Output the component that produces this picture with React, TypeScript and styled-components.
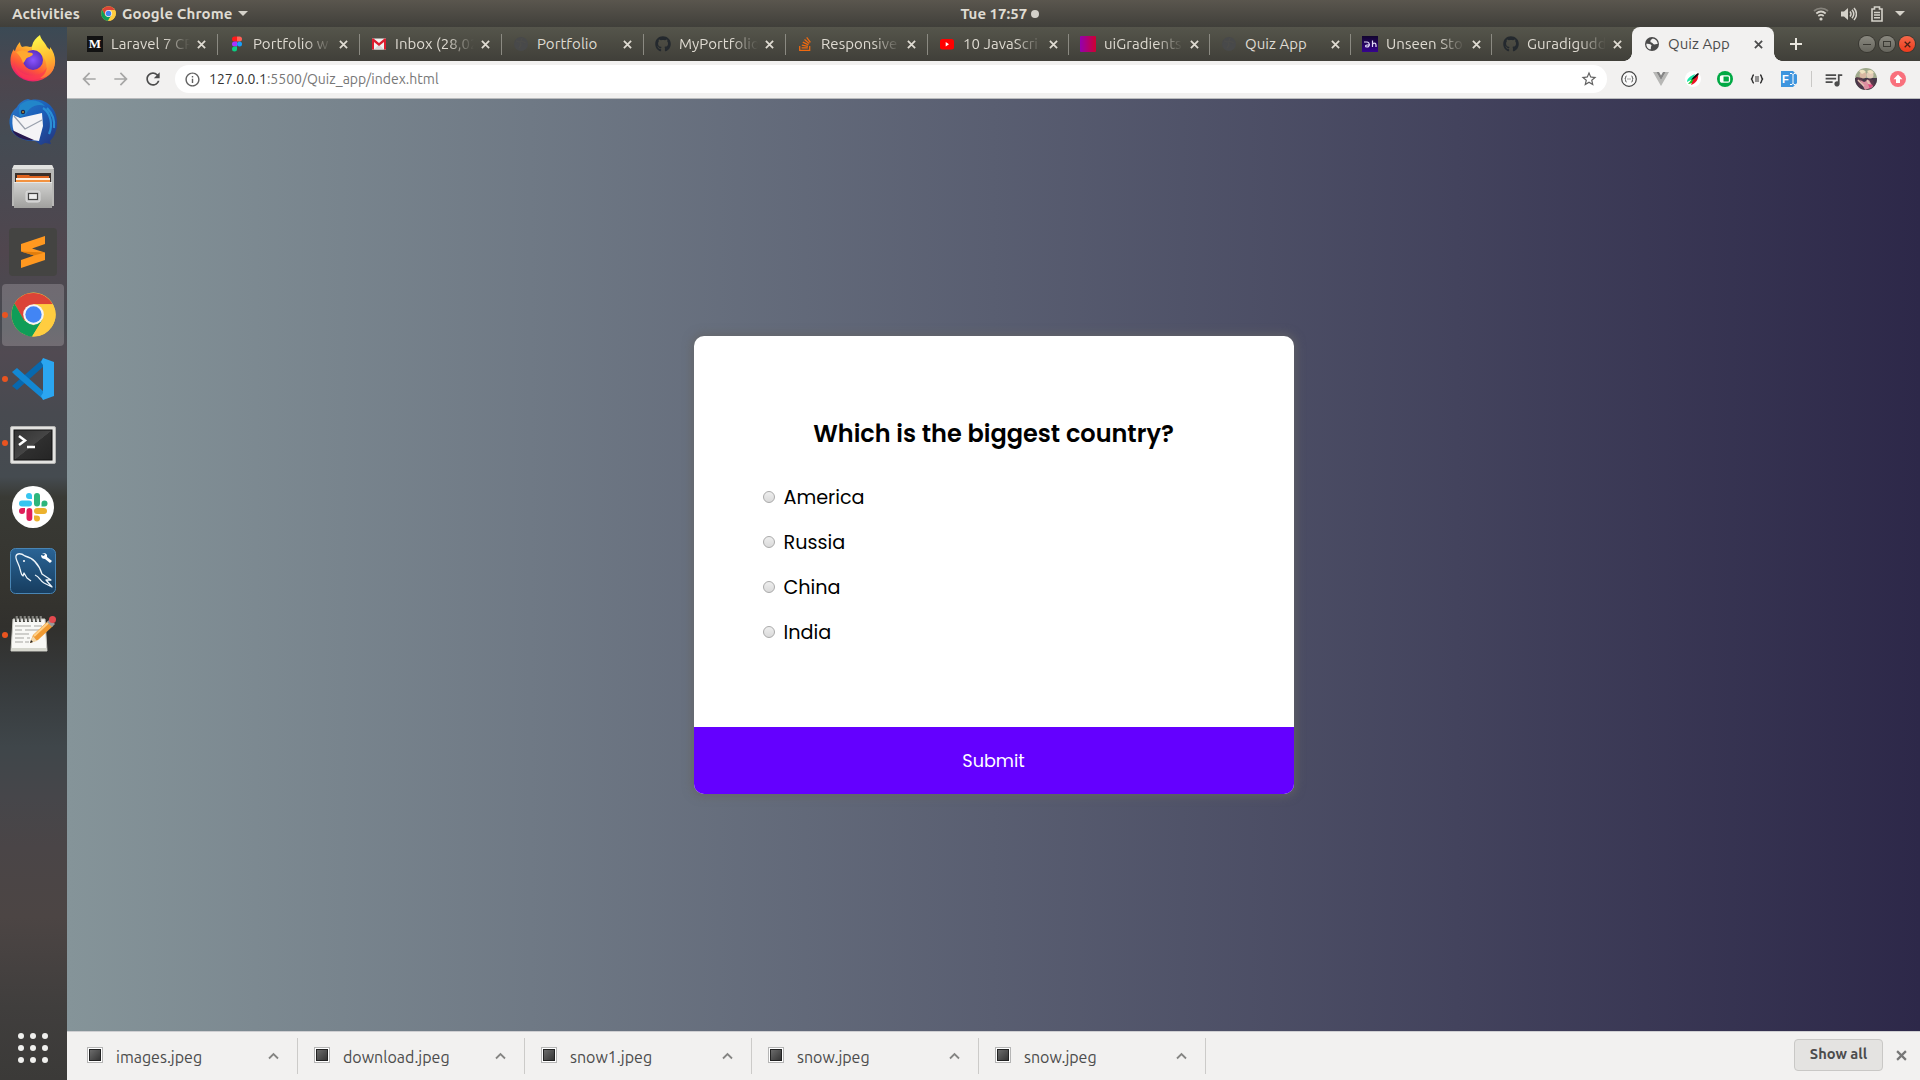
import React from "react";
import styled, { createGlobalStyle, css } from "styled-components";
import { FaGithub, FaStackOverflow } from "react-icons/fa";
import { MdQueueMusic, MdStarBorder, MdRefresh, MdArrowBack, MdArrowForward, MdInfoOutline } from "react-icons/md";

const ui = `Ubuntu, "Noto Sans", "Open Sans", sans-serif`;
const quiz = `Poppins, Inter, "Open Sans", sans-serif`;

const Global = createGlobalStyle`
  * { box-sizing: border-box; }
  html, body { margin: 0; padding: 0; overflow: hidden; }
  svg { display: block; flex: none; }
`;

const Desktop = styled.div`
  width: 1920px;
  height: 1080px;
  display: grid;
  grid-template: 27px 1053px / 67px 1853px;
  font-family: ${ui};
  overflow: hidden;
`;

/* ---------- system bar ---------- */
const SystemBar = styled.header`
  grid-column: 1 / 3;
  display: grid;
  grid-template-columns: 1fr auto 1fr;
  align-items: center;
  background: linear-gradient(#5a564e, #403f3a);
  color: #dfdbd2;
  font-size: 15px;
  font-weight: 600;
  line-height: 26px;
  letter-spacing: 0.12px;
`;
const SystemLeft = styled.div`
  display: flex;
  align-items: center;
  padding-left: 12px;
  white-space: nowrap;
`;
const SystemLabel = styled.span<{ $w: number; $ml?: number }>`
  width: ${(p) => p.$w}px;
  margin-left: ${(p) => p.$ml ?? 0}px;
  white-space: nowrap;
`;
const Clock = styled.div`
  display: flex;
  align-items: center;
  gap: 2px;
  margin-left: 80px;
  width: 79px;
  letter-spacing: 0;
`;
const ClockDot = styled.i`
  width: 8px;
  height: 8px;
  border-radius: 50%;
  background: #d3d0c9;
`;
const SystemRight = styled.div`
  display: flex;
  justify-content: flex-end;
  align-items: center;
  padding-right: 15px;
`;
const Caret = styled.i`
  border: 5px solid transparent;
  border-top-color: #d5d2ca;
  border-bottom: 0;
`;

/* ---------- dock ---------- */
const Dock = styled.nav`
  display: flex;
  flex-direction: column;
  background: linear-gradient(
    #3b4a55 0, #4d464e 55px, #444b53 110px, #50464e 225px, #474b51 300px, #514a52 325px, #484a50 385px,
    #454b50 450px, #393a35 470px, #35342f 560px, #31302d 600px, #373b3d 660px, #3f464a 720px, #46464a 770px,
    #4a4547 820px, #4c4544 890px, #403e3d 980px, #3b3a38 1053px
  );
`;
const DockItem = styled.div<{ $active?: boolean }>`
  height: 62px;
  margin: 0 3px 2.15px 2px;
  display: flex;
  align-items: center;
  border-radius: 4px;
  ${(p) => p.$active && css`background: rgba(255, 245, 250, 0.2);`}
`;
const RunDot = styled.i<{ $on?: boolean }>`
  width: 6px;
  height: 6px;
  border-radius: 50%;
  background: ${(p) => (p.$on ? "#e95420" : "transparent")};
`;
const DockIcon = styled.span<{ $dy?: number }>`
  width: 50px;
  display: grid;
  place-items: center;
  margin-top: ${(p) => 2 * (p.$dy ?? 0)}px;
`;
const AppsGrid = styled.div`
  margin: auto 0 17px 18px;
  display: grid;
  grid-template-columns: repeat(3, 6px);
  gap: 6px;
`;
const AppsDot = styled.i`
  width: 6px;
  height: 6px;
  border-radius: 50%;
  background: #f0f0ee;
`;

/* ---------- browser ---------- */
const Browser = styled.main`
  display: flex;
  flex-direction: column;
  min-width: 0;
`;
const TabStrip = styled.div`
  height: 34px;
  display: flex;
  align-items: center;
  padding-left: 8px;
  background: linear-gradient(#55554b, #403f39);
`;
const TabBox = styled.div<{ $w: number; $active?: boolean; $line?: boolean }>`
  position: relative;
  width: ${(p) => p.$w}px;
  height: 34px;
  flex: none;
  display: flex;
  align-items: center;
  padding-left: 12px;
  color: ${(p) => (p.$active ? "#4c4c4c" : "#dfdbd2")};
  ${(p) => p.$active && css`
    background: #f2f1f0;
    border-radius: 8px 8px 0 0;
    &::before, &::after {
      content: "";
      position: absolute;
      bottom: 0;
      width: 8px;
      height: 8px;
    }
    &::before { left: -8px; background: radial-gradient(circle at 0 0, transparent 7.5px, #f2f1f0 8px); }
    &::after { right: -8px; background: radial-gradient(circle at 100% 0, transparent 7.5px, #f2f1f0 8px); }
  `}
  ${(p) => p.$line && css`
    &::after {
      content: "";
      position: absolute;
      right: -1px;
      top: 7px;
      width: 1px;
      height: 21px;
      background: #8b8a82;
    }
  `}
`;
const Favicon = styled.span`
  width: 16px;
  height: 16px;
  display: grid;
  place-items: center;
  flex: none;
`;
const TabTitle = styled.span<{ $fade?: boolean }>`
  margin-left: 8px;
  width: 80px;
  flex: none;
  height: 22px;
  line-height: 21px;
  white-space: nowrap;
  font-size: 15px;
  letter-spacing: 0.04px;
  ${(p) => p.$fade && css`mask-image: linear-gradient(90deg, #000 52px, transparent 79px);`}
`;
const TabClose = styled.span`
  margin-left: 6px;
`;
const NewTab = styled.span`
  margin-left: 16px;
`;
const WindowButtons = styled.div`
  margin: 0 5px 0 auto;
  display: flex;
  gap: 4px;
`;
const WindowButton = styled.span<{ $close?: boolean }>`
  width: 16px;
  height: 16px;
  border-radius: 50%;
  display: grid;
  place-items: center;
  background: ${(p) => (p.$close ? "linear-gradient(#f5694a, #ee3a1c)" : "linear-gradient(#8a8980, #66655d)")};
  box-shadow: 0 0 0 1px #393832;
`;

const Toolbar = styled.div`
  height: 38px;
  display: flex;
  align-items: flex-start;
  background: #f2f1f0;
  border-bottom: 1px solid #b9bbbd;
`;
const ToolSlot = styled.span<{ $w: number; $ml?: number; $color?: string }>`
  width: ${(p) => p.$w}px;
  margin-left: ${(p) => p.$ml ?? 0}px;
  height: 36px;
  display: grid;
  place-items: center;
  flex: none;
  color: ${(p) => p.$color ?? "#4c4c4c"};
`;
const AddressBar = styled.div`
  width: 1432px;
  height: 28px;
  margin: 4px 0 0 11px;
  padding: 0 9px 0 9px;
  border-radius: 14px;
  background: #fff;
  display: flex;
  align-items: center;
  color: #616161;
`;
const Url = styled.span`
  margin: 0 auto 0 8px;
  font-size: 14px;
  line-height: 26px;
  letter-spacing: 0.02px;
  color: #777;
`;
const Host = styled.span`
  color: #333;
`;
const ToolLine = styled.i`
  width: 1px;
  height: 16px;
  margin: 10px 0 0 12px;
  background: #c9c8c6;
`;
const PencilTile = styled.span`
  width: 16px;
  height: 16px;
  display: flex;
  align-items: center;
  padding-left: 1px;
  gap: 1px;
  background: #3e95de;
  clip-path: polygon(0 0, 75% 0, 100% 25%, 100% 75%, 75% 100%, 0 100%);
  color: #fff;
  font: bold 11px/16px "Liberation Sans", sans-serif;
`;

/* ---------- quiz page ---------- */
const Page = styled.section`
  height: 932px;
  display: flex;
  justify-content: center;
  align-items: center;
  background: linear-gradient(90deg, #859499, #2d2849);
  font-family: ${quiz};
`;
const Card = styled.article`
  width: 600px;
  height: 458px;
  border-radius: 10px;
  overflow: hidden;
  display: flex;
  flex-direction: column;
  background: #fff;
  box-shadow: 0 0 10px 2px rgba(100, 100, 100, 0.8);
`;
const CardBody = styled.div`
  flex: 1;
  padding: 79px 69px 0;
`;
const Question = styled.h2`
  margin: 0;
  text-align: center;
  font-size: 24px;
  font-weight: 600;
  line-height: 38px;
  color: #000;
`;
const Options = styled.ul`
  list-style: none;
  margin: 21px 0 0;
  padding: 0;
`;
const Option = styled.li`
  height: 45px;
  display: flex;
  align-items: center;
  gap: 9px;
  font-size: 19.2px;
  color: #000;
`;
const OptionText = styled.span`
  padding-top: 2px;
`;
const Radio = styled.i`
  width: 12px;
  height: 12px;
  border-radius: 50%;
  border: 1px solid #aaa;
  background: linear-gradient(#eee, #dadada);
`;
const Submit = styled.button`
  height: 67px;
  border: 0;
  padding: 2px 0 0;
  background: #6400ff;
  color: #fff;
  font: 400 17.6px/65px ${quiz};
`;

/* ---------- downloads ---------- */
const Downloads = styled.footer`
  flex: 1;
  display: flex;
  align-items: center;
  border-top: 1px solid #cfcfd2;
  background: #f2f1f0;
  color: #4c4c4c;
`;
const DownloadItem = styled.div`
  width: 227px;
  height: 36px;
  padding: 0 18px 0 16px;
  display: flex;
  align-items: center;
  border-right: 1px solid #cccbc9;
  &:first-child { width: 231px; padding-left: 20px; }
`;
const FileThumb = styled.i`
  width: 16px;
  height: 16px;
  margin-bottom: 2px;
  border: 1px solid #b5b5b5;
  background: linear-gradient(135deg, #777, #2a2a2a);
  box-shadow: inset 0 0 0 1px #fff, inset 0 0 0 2px #222;
`;
const FileName = styled.span`
  margin: 0 auto 0 13px;
  font-size: 16px;
  line-height: 24px;
  padding-top: 1px;
`;
const ShowAll = styled.button`
  width: 89px;
  height: 32px;
  margin: 0 13px 2px auto;
  padding: 0 0 2px;
  border: 1px solid #c9c8c6;
  border-radius: 4px;
  background: #e4e3e1;
  color: #4c4c4c;
  font: 600 14.67px/28px ${ui};
`;
const CloseSlot = styled.span`
  margin: 0 13px 2px 0;
`;

const Cross = ({ size = 9, color = "#dfdbd2", w = 2 }: { size?: number; color?: string; w?: number }) => (
  <svg width={size} height={size} viewBox="0 0 10 10" stroke={color} strokeWidth={w}>
    <path d="M1 1l8 8M9 1l-8 8" />
  </svg>
);

const ChromeLogo = ({ size }: { size: number }) => (
  <svg width={size} height={size} viewBox="0 0 48 48">
    <circle cx="24" cy="24" r="23.5" fill="#fdce3f" />
    <path d="M24 24L13.5 30 3.7 12.3A23.5 23.5 0 0 1 44.3 13H24z" fill="#db4437" />
    <path d="M3.7 12.3L13.9 30 24 35.5l9.5-6L22.5 47.5A23.5 23.5 0 0 1 3.7 12.3z" fill="#0f9d58" />
    <path d="M24 13h20.7a23.5 23.5 0 0 1-22.2 34.5L34 29z" fill="#ffcd40" />
    <circle cx="24" cy="24" r="11" fill="#f4f4f4" />
    <circle cx="24" cy="24" r="8.7" fill="#4285f4" />
  </svg>
);

const Firefox = () => (
  <svg width="46" height="48" viewBox="0 0 46 48">
    <defs>
      <linearGradient id="ffBody" x1=".8" y1="0" x2=".3" y2="1">
        <stop offset="0" stopColor="#fff44f" /><stop offset=".35" stopColor="#ffa22c" />
        <stop offset=".65" stopColor="#ff5a36" /><stop offset="1" stopColor="#e5107a" />
      </linearGradient>
      <linearGradient id="ffFlame" x1=".4" y1="0" x2=".6" y2="1">
        <stop offset="0" stopColor="#fff84a" /><stop offset=".6" stopColor="#ffb52e" /><stop offset="1" stopColor="#ff7139" />
      </linearGradient>
      <radialGradient id="ffGlobe"><stop offset="0" stopColor="#8a55ff" /><stop offset="1" stopColor="#5a2fc0" /></radialGradient>
    </defs>
    <path d="M10 8c0 2 1 4 2 5 3-1 5-1 8 0 6-2 16-3 21 4 5 8 5 17-1 23a23 23 0 0 1-34 0C-1 33-1 22 4 15c0 1 0 2 1 2 1-4 3-7 5-9z" fill="url(#ffBody)" />
    <path d="M22 12c1-5 4-8 8-11 1 5 5 7 7 12l3 4 0-4c5 6 7 15 3 23-3 6-9 8-13 8 8-6 8-15 3-21-3-4-8-5-11-6z" fill="url(#ffFlame)" />
    <circle cx="23" cy="26" r="10" fill="url(#ffGlobe)" />
    <path d="M6 18c4-2 8-2 11 0 2 1 5 0 6 2-1 3-6 3-7 5-1 1-1 3-3 4-1-4-3-7-7-11z" fill="#ffa930" />
    <path d="M4 27c2 11 12 16 22 14 6-1 9-4 11-8-1 11-11 14-18 13C10 45 4 37 4 27z" fill="#ff3c50" opacity=".65" />
  </svg>
);

const Thunderbird = () => (
  <svg width="50" height="50" viewBox="0 0 50 50">
    <defs><linearGradient id="tb" x2="1" y2="1"><stop stopColor="#2b79c8" /><stop offset=".5" stopColor="#1b5fb9" /><stop offset="1" stopColor="#25337a" /></linearGradient></defs>
    <path d="M20 2l3 1C38 0 50 12 49 27c0 8-4 14-7 17l1 3-6-1-4 2-6-4C15 45 3 38 2 29 0 21 4 14 9 10c2-4 6-7 11-8z" fill="url(#tb)" />
    <path d="M12 8C19 1 31 2 37 9c-9-3-15 1-19 8l-6 3c-1-5-2-7 0-12z" fill="#2286ca" />
    <path d="M35 11c8 5 10 17 6 26M39 11c6 6 8 12 7 20" stroke="#2a8fd4" strokeWidth="2.2" fill="none" />
    <path d="M5 18l7 3 22-5 1 13-4 15C22 43 10 40 6 35 4 29 4 23 5 18z" fill="#f4f4f6" />
    <path d="M6 19l11 13 17-9" fill="none" stroke="#9aa1ad" strokeWidth="1.300" />
    <path d="M4 33c7 3 14 7 22 10-10 1-19-3-22-10z" fill="#28194f" />
    <circle cx="15" cy="15" r="2.200" fill="#1c2a4a" /><circle cx="15" cy="15" r="1" fill="#b08b3a" />
  </svg>
);

const Files = () => (
  <svg width="44" height="46" viewBox="0 0 44 46">
    <defs><linearGradient id="cab" y2="1" x2="0"><stop stopColor="#d2d2d0" /><stop offset="1" stopColor="#a0a09e" /></linearGradient></defs>
    <path d="M3 1h38l2 5v36H1V6z" fill="#b9b9b7" /><path d="M3 1h38l2 4H1z" fill="#e1e1df" />
    <rect x="4" y="9" width="36" height="9" fill="#3b302b" />
    <path d="M6 11h12l1 1h19v5H6z" fill="#e0641f" /><path d="M5 14h34v2H5z" fill="#fff0df" /><path d="M5 16h34v2H5z" fill="#f29240" />
    <path d="M3 18h38v26H3z" fill="url(#cab)" /><path d="M3 18.5h38" stroke="#e8e8e6" />
    <rect x="15" y="27" width="14" height="11" rx="2" fill="#ccc" stroke="#ddd" />
    <rect x="17.500" y="29.500" width="9" height="6" fill="#eee" stroke="#444" strokeWidth="1.200" />
  </svg>
);

const Sublime = () => (
  <svg width="48" height="48" viewBox="0 0 48 48">
    <rect width="48" height="48" rx="4" fill="#444442" />
    <path d="M12 16l24-8v8l-13 4.500 13 4V32l-24 8v-8l13-4.500-13-4z" fill="#ff9820" />
    <path d="M12 23.500l24 1-11 3z" fill="#d97708" opacity=".8" />
  </svg>
);

const VsCode = () => (
  <svg width="44" height="44" viewBox="0 0 44 44">
    <path d="M1 29l5 4L33 9V1z" fill="#0868ae" />
    <path d="M1 15l5-4 27 24v8L4 18z" fill="#1388d4" />
    <path d="M32 1l11 4v34l-11 4-2-4 2-3V8l-2-3z" fill="#2ba6f0" />
  </svg>
);

const Terminal = () => (
  <svg width="46" height="38" viewBox="0 0 46 38">
    <defs><linearGradient id="term" x2="1" y2="1"><stop stopColor="#333" /><stop offset=".5" stopColor="#454545" /><stop offset=".51" stopColor="#2f2f2f" /><stop offset="1" stopColor="#252525" /></linearGradient></defs>
    <rect x=".5" y=".5" width="45" height="37" rx="1.500" fill="#e3e3e1" stroke="#b5b5b3" />
    <rect x="4" y="4" width="38" height="30" fill="url(#term)" stroke="#111" />
    <path d="M9 10l6 4.500L9 19" fill="none" stroke="#fff" strokeWidth="2.500" /><path d="M17 21h8" stroke="#fff" strokeWidth="2.500" />
  </svg>
);

const Slack = () => (
  <svg width="42" height="42" viewBox="0 0 42 42">
    <circle cx="21" cy="21" r="21" fill="#fff" />
    <g fill="#36c5f0"><rect x="7" y="14.500" width="13" height="6" rx="3" /><path d="M20 13h-3a3 3 0 1 1 3-3z" /></g>
    <g fill="#2eb67d"><rect x="22" y="7" width="6" height="13.500" rx="3" /><path d="M29.500 20.500v-3a3 3 0 1 1 3 3z" /></g>
    <g fill="#ecb22e"><rect x="22" y="22" width="13" height="6" rx="3" /><path d="M22 29.500h3a3 3 0 1 1-3 3z" /></g>
    <g fill="#e01e5a"><rect x="14.500" y="22" width="5.800" height="13" rx="2.900" /><path d="M13 22v3a3 3 0 1 1-3-3z" /></g>
  </svg>
);

const MySql = () => (
  <svg width="46" height="46" viewBox="0 0 46 46">
    <defs><linearGradient id="sql" x2="0" y2="1"><stop stopColor="#2a6496" /><stop offset="1" stopColor="#173d5f" /></linearGradient></defs>
    <rect x=".5" y=".5" width="45" height="45" rx="5" fill="url(#sql)" stroke="#4985b4" />
    <path d="M21 33l-4-3-3-5-1 3c-2-1-2-4-3-7C9 16 5 11 6 8c1-3 5-3 9 0 9 2 14 9 17 18l9 6-5 0 6 7-8-4c-4-2-4-6-9-8" fill="none" stroke="#eef5fa" strokeWidth="1.300" strokeLinejoin="round" />
    <circle cx="14" cy="13" r="1" fill="#fff" />
    <path d="M32 6c2-1 4-1 5 1v2l5 4-2 2-5-4c-2 0-4-1-4-4l3 1 1-2z" fill="#fff" />
  </svg>
);

const Notes = () => (
  <svg width="46" height="38" viewBox="0 0 46 38">
    <path d="M3 4h32l2 32H1z" fill="#f8f8f5" stroke="#c6c6bf" /><path d="M1.500 33h35v3h-35z" fill="#d5d6cd" />
    <path d="M5 11h16m3 0h8M5 15h7m3 0h16M5 19h14M5 23h9m3 0h3M5 27h8m2 0h4" stroke="#a5a5a1" strokeWidth="1" />
    <path d="M6 1v6M10 1v6M14 1v6M18 1v6M22 1v6M26 1v6M30 1v6" stroke="#4a4a45" strokeWidth="2.200" />
    <path d="M7 1v5M11 1v5M15 1v5M19 1v5M23 1v5M27 1v5M31 1v5" stroke="#d8d8d4" strokeWidth=".8" />
    <path d="M20 28l3-8L38 6l5 5-15 14z" fill="#f09a32" /><path d="M24 21L39 7" stroke="#ffd188" strokeWidth="2" />
    <path d="M20 28l3-7 4 5z" fill="#f0d6aa" /><path d="M20 28l1-3 2 2z" fill="#222" />
    <path d="M37 7l3-3 5 5-3 3z" fill="#999" /><circle cx="42.500" cy="4.500" r="3.500" fill="#e44a4f" />
  </svg>
);

const DimGlobe = () => (
  <svg width="16" height="16" viewBox="0 0 16 16"><circle cx="8" cy="8" r="7" fill="#48494a" /><path d="M3 5l4 1 1 3-2 3M9 2l-1 3 5 2" stroke="#4c4c4a" fill="none" strokeWidth="1.500" /></svg>
);
const Globe = () => (
  <svg width="16" height="16" viewBox="0 0 16 16">
    <circle cx="8" cy="8" r="7" fill="#4a4a4a" />
    <path d="M8.800 2.400c-.8.900-2.300 1-2.300 2.300 0 1-.4 1.500 1 1.800 1.600.3 1.200 1.800 2.600 1.900 1.400 0 2.200-.6 3.600-.3.100-2.800-1.800-5-4.900-5.700z" fill="#f2f1f0" />
    <path d="M2.300 7.700c1.600 0 4 .1 5 1.200.8.900-.6 1.500-.4 2.500.1 1 .1 1.600-.8 2.100-2.300-.8-3.900-3-3.800-5.800z" fill="#f2f1f0" />
  </svg>
);
const Medium = () => (
  <svg width="16" height="16" viewBox="0 0 16 16">
    <rect width="16" height="16" fill="#121212" />
    <text x="8" y="12.300" fontFamily="Liberation Serif, serif" fontSize="13" fontWeight="700" fill="#fff" textAnchor="middle">M</text>
  </svg>
);
const Figma = () => (
  <svg width="16" height="16" viewBox="0 0 16 16">
    <path d="M8 .5H5.500a2.500 2.500 0 0 0 0 5H8z" fill="#ff1a1a" /><path d="M8 .5h2.500a2.500 2.500 0 0 1 0 5H8z" fill="#ff6157" />
    <path d="M8 5.500H5.500a2.500 2.500 0 0 0 0 5H8z" fill="#a733ff" /><circle cx="10.500" cy="8" r="2.500" fill="#18a0fb" />
    <path d="M8 10.500H5.500A2.500 2.500 0 1 0 8 13z" fill="#0acf83" />
  </svg>
);
const Gmail = () => (
  <svg width="16" height="16" viewBox="0 0 16 16">
    <path d="M1 2.500h14v11H1z" fill="#f1f1f1" /><path d="M3 13.500l5-5 5 5z" fill="#d8d8d8" />
    <path d="M1 13.500v-11h1.500L8 7l5.500-4.500H15v11h-2V6L8 10 3 6v7.500z" fill="#dc1c2e" />
  </svg>
);
const YouTube = () => (
  <svg width="16" height="16" viewBox="0 0 16 16"><rect x="1" y="3" width="14" height="10.500" rx="2.500" fill="#f00" /><path d="M6.700 6v4.500L10 8.300z" fill="#fff" /></svg>
);
const Gradients = () => (
  <svg width="16" height="16" viewBox="0 0 16 16"><defs><linearGradient id="uig"><stop stopColor="#9400b0" /><stop offset="1" stopColor="#cf0030" /></linearGradient></defs><rect width="16" height="16" rx="1" fill="url(#uig)" /></svg>
);
const Unseen = () => (
  <svg width="16" height="16" viewBox="0 0 16 16">
    <defs><linearGradient id="uns" x2="0" y2="1"><stop stopColor="#12052e" /><stop offset="1" stopColor="#36048f" /></linearGradient></defs>
    <rect width="16" height="16" fill="url(#uns)" />
    <path d="M2 6h3c3 0 3 5 0 5-2 0-2-2 0-2h3M10.500 4.500V11m0-2c0-2.500 3.500-2.500 3.500 0v2" fill="none" stroke="#e3dcf7" strokeWidth="1.200" />
  </svg>
);

const tabs: { icon: React.ReactNode; title: string; fade?: boolean; w: number }[] = [
  { icon: <Medium />, title: "Laravel 7 CR", fade: true, w: 142 },
  { icon: <Figma />, title: "Portfolio w", fade: true, w: 142 },
  { icon: <Gmail />, title: "Inbox (28,02", fade: true, w: 142 },
  { icon: <DimGlobe />, title: "Portfolio", w: 142 },
  { icon: <FaGithub size={16} color="#24292e" />, title: "MyPortfolio", fade: true, w: 142 },
  { icon: <FaStackOverflow size={16} color="#f06a10" />, title: "Responsive", fade: true, w: 142 },
  { icon: <YouTube />, title: "10 JavaScri", fade: true, w: 141 },
  { icon: <Gradients />, title: "uiGradients", fade: true, w: 141 },
  { icon: <DimGlobe />, title: "Quiz App", w: 141 },
  { icon: <Unseen />, title: "Unseen Sto", fade: true, w: 141 },
  { icon: <FaGithub size={16} color="#24292e" />, title: "Guradigudd", fade: true, w: 141 },
  { icon: <Globe />, title: "Quiz App", w: 142 },
];

const dock = [
  { icon: <Firefox /> },
  { icon: <Thunderbird /> },
  { icon: <Files />, dy: 1 },
  { icon: <Sublime />, dy: 1.5 },
  { icon: <ChromeLogo size={45} />, on: true, active: true },
  { icon: <VsCode />, on: true },
  { icon: <Terminal />, on: true, dy: 2 },
  { icon: <Slack /> },
  { icon: <MySql /> },
  { icon: <Notes />, on: true, dy: -1 },
];

export default function App() {
  return (
    <Desktop>
      <Global />
      <SystemBar>
        <SystemLeft>
          <SystemLabel $w={89}>Activities</SystemLabel>
          <ChromeLogo size={15} />
          <SystemLabel $w={116} $ml={6}>Google Chrome</SystemLabel>
          <Caret />
        </SystemLeft>
        <Clock><SystemLabel $w={68}>Tue 17:57</SystemLabel><ClockDot /></Clock>
        <SystemRight>
          <svg width="16" height="14" viewBox="0 0 16 14" fill="none" stroke="#d5d2ca" strokeWidth="1.800">
            <path d="M1 4c4-3.600 10-3.600 14 0" opacity=".4" /><path d="M3.300 6.500c3-2.500 6.400-2.500 9.400 0M5.300 9c2-1.600 3.400-1.600 5.400 0" /><circle cx="8" cy="12" r="1.600" fill="#d5d2ca" stroke="none" />
          </svg>
          <svg width="16" height="14" viewBox="0 0 16 14" style={{ marginLeft: 12 }}>
            <path d="M0 4.500h3L7 1v12L3 9.500H0z" fill="#d5d2ca" /><path d="M9 4.500q2 2.500 0 5M11 2.800q3.500 4.200 0 8.400M13 1q5 6 0 12" fill="none" stroke="#d5d2ca" strokeWidth="1.500" />
          </svg>
          <svg width="12" height="16" viewBox="0 0 12 16" style={{ margin: "0 12px 0 14px" }} fill="none" stroke="#d5d2ca" strokeWidth="1.600">
            <path d="M1 3h2.500V1h5v2H11v12H1z" /><path d="M3 6.500h6M3 9h6M3 11.800h6" />
          </svg>
          <Caret />
        </SystemRight>
      </SystemBar>

      <Dock>
        {dock.map((d, i) => (
          <DockItem key={i} $active={d.active}>
            <RunDot $on={d.on} />
            <DockIcon $dy={d.dy}>{d.icon}</DockIcon>
          </DockItem>
        ))}
        <AppsGrid>{Array.from({ length: 9 }, (_, i) => <AppsDot key={i} />)}</AppsGrid>
      </Dock>

      <Browser>
        <TabStrip>
          {tabs.map((t, i) => (
            <TabBox key={i} $w={t.w} $active={i === 11} $line={i < 10}>
              <Favicon>{t.icon}</Favicon>
              <TabTitle $fade={t.fade}>{t.title}</TabTitle>
              <TabClose><Cross color={i === 11 ? "#4c4c4c" : "#dfdbd2"} /></TabClose>
            </TabBox>
          ))}
          <NewTab><svg width="12" height="12" viewBox="0 0 12 12" stroke="#e9e6de" strokeWidth="2"><path d="M6 0v12M0 6h12" /></svg></NewTab>
          <WindowButtons>
            <WindowButton><svg width="8" height="8" stroke="#3a3933" fill="none"><path d="M0 4.500h8" /></svg></WindowButton>
            <WindowButton><svg width="8" height="8" stroke="#3a3933" fill="none"><rect x=".5" y="1.500" width="7" height="5" /></svg></WindowButton>
            <WindowButton $close><Cross size={7} color="#4a2015" w={1.8} /></WindowButton>
          </WindowButtons>
        </TabStrip>

        <Toolbar>
          <ToolSlot $w={22} $ml={11} $color="#a6a6a5"><MdArrowBack size={20} /></ToolSlot>
          <ToolSlot $w={22} $ml={10} $color="#a6a6a5"><MdArrowForward size={20} /></ToolSlot>
          <ToolSlot $w={22} $ml={10}><MdRefresh size={20} /></ToolSlot>
          <AddressBar>
            <MdInfoOutline size={17} />
            <Url><Host>127.0.0.1</Host>:5500/Quiz_app/index.html</Url>
            <MdStarBorder size={18} />
          </AddressBar>
          <ToolSlot $w={20} $ml={12}>
            <svg width="16" height="16" viewBox="0 0 16 16" fill="none" stroke="#444"><circle cx="8" cy="8" r="7.300" fill="#fafafa" strokeWidth="1.200" /><path d="M5.500 5C4 5 5.300 7.500 3.800 8c1.500.5.2 3 1.700 3M10.500 5c1.500 0 .2 2.500 1.700 3-1.500.5-.2 3-1.700 3M6.500 8h1M8.500 8h1" /></svg>
          </ToolSlot>
          <ToolSlot $w={20} $ml={12}>
            <svg width="16" height="14" viewBox="0 0 16 14"><path d="M0 0h3.300L8 8l4.700-8H16L8 14z" fill="#b7b7b5" /><path d="M3.300 0H6l2 3.500L10 0h2.700L8 8z" fill="#858585" /></svg>
          </ToolSlot>
          <ToolSlot $w={20} $ml={12}>
            <svg width="16" height="16" viewBox="0 0 16 16"><circle cx="8" cy="8" r="8" fill="#fff" /><path d="M2 11c0-4 4-6 8-8L8 8z" fill="#17e8a6" /><path d="M3 13l5-6 3-3-3 8z" fill="#19c51c" /><path d="M6 14l3-7 4-4c1 5-2 9-7 11z" fill="#ef1026" /><path d="M6 9c2-3 4-5 7-7l1 1c-2 2-4 5-8 6z" fill="#111" /></svg>
          </ToolSlot>
          <ToolSlot $w={20} $ml={12}>
            <svg width="16" height="16" viewBox="0 0 16 16"><circle cx="8" cy="8" r="8" fill="#00a944" /><rect x="3.500" y="4.800" width="9" height="6.400" rx="1.500" fill="none" stroke="#fff" strokeWidth="1.300" /><path d="M4 5h2.500v6H4z" fill="#fff" /></svg>
          </ToolSlot>
          <ToolSlot $w={20} $ml={12}>
            <svg width="14" height="10" viewBox="0 0 14 10" fill="none" stroke="#333" strokeWidth="1.500">
              <path d="M4 1C1.500 1 3.500 4.500 1 5c2.500.5.5 4 3 4M10 1c2.500 0 .5 3.500 3 4-2.500.5-.5 4-3 4" /><path d="M5 3h4M5 5h4M5 7h4" strokeWidth="1.200" />
            </svg>
          </ToolSlot>
          <ToolSlot $w={20} $ml={12}><PencilTile>F<svg width="6" height="12" viewBox="0 0 6 12" stroke="#fff" fill="none"><path d="M0 .5h2l1 1 1-1h2M3 1v10M0 11.500h2l1-1 1 1h2" /></svg></PencilTile></ToolSlot>
          <ToolLine />
          <ToolSlot $w={22} $ml={10}><MdQueueMusic size={21} /></ToolSlot>
          <ToolSlot $w={22} $ml={11}>
            <svg width="22" height="22" viewBox="0 0 22 22">
              <defs><clipPath id="avatar"><circle cx="11" cy="11" r="11" /></clipPath></defs>
              <g clipPath="url(#avatar)">
                <path d="M0 0h22v22H0z" fill="#9fa98c" /><path d="M0 10h22v12H0z" fill="#453748" />
                <circle cx="8" cy="7" r="3.500" fill="#d9b7a2" /><circle cx="15" cy="7" r="3.500" fill="#e2cbb8" />
                <path d="M4 3q4-3 7 1l-4 2zM12 3q5-3 7 2l-4 1z" fill="#efe2bf" />
                <path d="M1 9l6 1 2 5-5 4zM11 11l7 1 2 6-7 1z" fill="#5b3a4b" />
                <path d="M5 12l4 2 5-2 4 7-8 3z" fill="#dc8fa0" /><path d="M3 12l6 6M12 12l3 5" stroke="#e4c3b2" strokeWidth="1.600" />
                <path d="M13 16l5 1-3 4z" fill="#df477d" />
              </g>
            </svg>
          </ToolSlot>
          <ToolSlot $w={20} $ml={11}>
            <svg width="16" height="16" viewBox="0 0 16 16"><circle cx="8" cy="8" r="8" fill="#f9707c" /><path d="M8 3.500l4.500 4.700H10V12H6V8.200H3.500z" fill="#fff" /></svg>
          </ToolSlot>
        </Toolbar>

        <Page>
          <Card>
            <CardBody>
              <Question>Which is the biggest country?</Question>
              <Options>
                {["America", "Russia", "China", "India"].map((o) => (
                  <Option key={o}><Radio /><OptionText>{o}</OptionText></Option>
                ))}
              </Options>
            </CardBody>
            <Submit>Submit</Submit>
          </Card>
        </Page>

        <Downloads>
          {["images.jpeg", "download.jpeg", "snow1.jpeg", "snow.jpeg", "snow.jpeg"].map((f, i) => (
            <DownloadItem key={i}>
              <FileThumb />
              <FileName>{f}</FileName>
              <svg width="11" height="8" viewBox="0 0 11 8" fill="none" stroke="#858583" strokeWidth="1.800"><path d="M1 6.500L5.500 2 10 6.500" /></svg>
            </DownloadItem>
          ))}
          <ShowAll>Show all</ShowAll>
          <CloseSlot><Cross size={11} color="#777" /></CloseSlot>
        </Downloads>
      </Browser>
    </Desktop>
  );
}
